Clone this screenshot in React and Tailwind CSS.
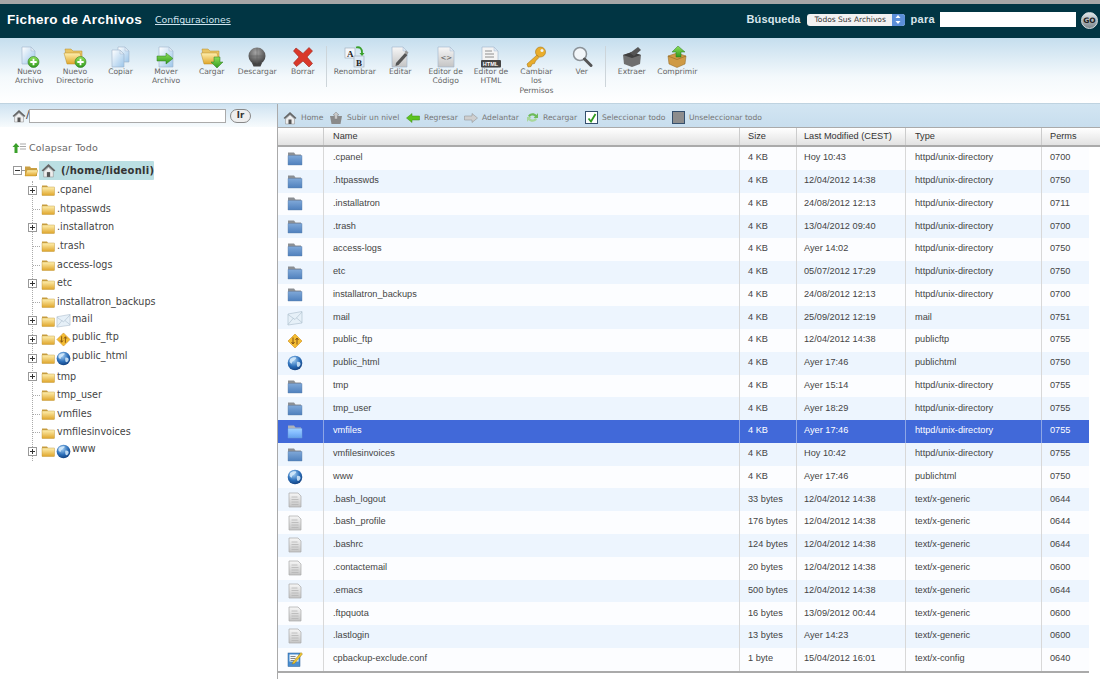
import React from "react";

const Defs = () => (
  <svg className="block w-0 h-0" aria-hidden="true">
    <defs>
      <linearGradient id="yf" x1="0" y1="0" x2="0" y2="1"><stop offset="0" stopColor="#fff0b0" /><stop offset="1" stopColor="#dfa52a" /></linearGradient>
      <linearGradient id="bf" x1="0" y1="0" x2="0" y2="1"><stop offset="0" stopColor="#7fa8d8" /><stop offset="1" stopColor="#4f80bd" /></linearGradient>
      <linearGradient id="dc" x1="0" y1="0" x2="1" y2="1"><stop offset="0" stopColor="#ffffff" /><stop offset="1" stopColor="#9cc6ea" /></linearGradient>
      <linearGradient id="dg" x1="0" y1="0" x2="0" y2="1"><stop offset="0" stopColor="#f7f7f7" /><stop offset="1" stopColor="#c4c4c4" /></linearGradient>
      <radialGradient id="gb" cx="0.4" cy="0.3" r="0.8"><stop offset="0" stopColor="#a8d2f5" /><stop offset="0.55" stopColor="#2a6db8" /><stop offset="1" stopColor="#0c3470" /></radialGradient>
      <radialGradient id="sp" cx="0.45" cy="0.3" r="0.8"><stop offset="0" stopColor="#a8a8a8" /><stop offset="1" stopColor="#2f2f2f" /></radialGradient>
      <linearGradient id="gr" x1="0" y1="0" x2="0" y2="1"><stop offset="0" stopColor="#8fe05a" /><stop offset="1" stopColor="#2f9a1e" /></linearGradient>
    </defs>
  </svg>
);

const Ic = ({ w = 22, h = 22, vb, children, cls = "" }) => (
  <svg width={w} height={h} viewBox={vb || `0 0 ${w} ${h}`} className={`block shrink-0 ${cls}`}>{children}</svg>
);

const Plus = () => (
  <g>
    <circle cx="15.5" cy="16" r="5.5" fill="url(#gr)" stroke="#2d7a22" strokeWidth=".6" />
    <path d="M15.5 12.8v6.4M12.3 16h6.4" stroke="#fff" strokeWidth="1.8" />
  </g>
);
const Page = ({ x = 4, y = 1, w = 13, h = 17, fill = "url(#dc)" }) => (
  <g>
    <path d={`M${x} ${y}h${w - 4}l4 4v${h - 4}h-${w}z`} fill={fill} stroke="#9db4c9" strokeWidth=".6" />
    <path d={`M${x + w - 4} ${y}v4h4z`} fill="#dfe9f3" stroke="#9db4c9" strokeWidth=".4" />
  </g>
);
const BigFolder = () => (
  <g>
    <path d="M2 3h6l2 2h9v11H4z" fill="#e8c464" stroke="#b98e2b" strokeWidth=".5" />
    <path d="M1 7h16l3 11H4z" fill="url(#yf)" stroke="#b98e2b" strokeWidth=".5" />
  </g>
);

const TB = {
  newfile: <Ic><Page /><Plus /></Ic>,
  newdir: <Ic w={24}><BigFolder /><g transform="translate(2 0)"><Plus /></g></Ic>,
  copy: <Ic><Page x={9} y={1} w={11} h={15} /><Page x={3} y={4} w={12} h={17} /></Ic>,
  move: (
    <Ic><Page x={4} y={1} w={14} h={20} />
      <path d="M2 10h9V7l7 5.5L11 18v-3H2z" fill="url(#gr)" stroke="#2d7a22" strokeWidth=".5" />
    </Ic>
  ),
  upload: (
    <Ic w={24}><BigFolder />
      <path d="M14 11h6v5h3l-6 6-6-6h3z" fill="url(#gr)" stroke="#2d7a22" strokeWidth=".5" />
    </Ic>
  ),
  download: (
    <Ic>
      <circle cx="11" cy="10" r="8.5" fill="url(#sp)" />
      <path d="M6 17h10l-1.5 3.5h-7z" fill="#444" />
      <path d="M3 10h16M11 2v16" stroke="#5c5c5c" strokeWidth=".5" />
    </Ic>
  ),
  del: (
    <Ic>
      <path d="M4 2l7 5.5L17 1.5l3.5 3.5-5.5 6 5.5 6.500-3.5 3.500-6-6-6.500 5.500L1.500 17 7 11 1.500 5z" fill="#d9382a" stroke="#9d2117" strokeWidth=".6" />
    </Ic>
  ),
  rename: (
    <Ic>
      <rect x="1" y="2" width="10" height="10" fill="#f4f7fb" stroke="#9aa8b5" strokeWidth=".6" />
      <rect x="10" y="10" width="10" height="11" fill="#dce9f6" stroke="#9aa8b5" strokeWidth=".6" />
      <text x="3" y="10.500" fontSize="9" fontWeight="700" fontFamily="Liberation Serif" fill="#222">A</text>
      <text x="12" y="19.500" fontSize="9" fontWeight="700" fontFamily="Liberation Serif" fill="#222">B</text>
      <path d="M12 1.500c4-1 6 1 6 5v2" fill="none" stroke="#3aa02a" strokeWidth="1.800" />
      <path d="M15.500 7h5l-2.500 3z" fill="#3aa02a" />
    </Ic>
  ),
  edit: (
    <Ic>
      <Page x={3} y={1} w={15} h={20} fill="url(#dg)" />
      <path d="M7 17l9-10 2.500 2-9 10-3 1z" fill="#555" />
      <path d="M15.500 6l1.500-1.500 2.500 2-1.500 2z" fill="#999" />
    </Ic>
  ),
  code: (
    <Ic>
      <Page x={3} y={1} w={16} h={20} fill="url(#dg)" />
      <text x="5.500" y="14" fontSize="7" fontFamily="DejaVu Sans" fill="#555">{"<>"}</text>
    </Ic>
  ),
  html: (
    <Ic>
      <Page x={2} y={1} w={16} h={20} fill="#f4f4f4" />
      <path d="M5 5h7M5 8h9M5 11h9" stroke="#777" strokeWidth=".8" />
      <rect x="1" y="14" width="20" height="7.500" rx="1" fill="#444" />
      <text x="2.800" y="20" fontSize="5.500" fontWeight="700" fontFamily="Liberation Sans" fill="#fff">HTML</text>
    </Ic>
  ),
  key: (
    <Ic>
      <circle cx="15.500" cy="6" r="5" fill="#e9ad2c" stroke="#a9781a" strokeWidth=".6" />
      <circle cx="17" cy="4.500" r="1.500" fill="#eef3f8" />
      <path d="M12 9L2 18l1 3 3-.5 1-2.500 2.500-.5 1-2.500 3.500-3.500z" fill="#e9ad2c" stroke="#a9781a" strokeWidth=".6" />
    </Ic>
  ),
  view: (
    <Ic>
      <circle cx="9" cy="8" r="6.500" fill="#f2f6f9" stroke="#8b9298" strokeWidth="1.500" />
      <path d="M13.500 13l6.500 6.500" stroke="#555" strokeWidth="3" strokeLinecap="round" />
    </Ic>
  ),
  extract: (
    <Ic>
      <path d="M2 9l9-3 9 3-1 9-8 3-8-3z" fill="#6f6f6f" />
      <path d="M2 9l9 3 9-3-9-3z" fill="#3f3f3f" />
      <path d="M9 7l8-6 3 3-7 6z" fill="#555" />
    </Ic>
  ),
  compress: (
    <Ic>
      <path d="M2 10l9-3 9 3-1 8-8 3.500L3 18z" fill="#cf9a45" stroke="#8f6420" strokeWidth=".5" />
      <path d="M2 10l9 3.500 9-3.500" fill="none" stroke="#8f6420" strokeWidth=".6" />
      <path d="M10 11V6H6l6-6 7 6h-4v5z" fill="url(#gr)" stroke="#2d7a22" strokeWidth=".5" />
    </Ic>
  ),
};

const tools1 = [
  ["newfile", ["Nuevo", "Archivo"]], ["newdir", ["Nuevo", "Directorio"]], ["copy", ["Copiar"]], ["move", ["Mover", "Archivo"]],
  ["upload", ["Cargar"]], ["download", ["Descargar"]], ["del", ["Borrar"]],
];
const tools2 = [
  ["rename", ["Renombrar"]], ["edit", ["Editar"]], ["code", ["Editor de", "Código"]], ["html", ["Editor de", "HTML"]],
  ["key", ["Cambiar", "los", "Permisos"]], ["view", ["Ver"]],
];
const tools3 = [["extract", ["Extraer"]], ["compress", ["Comprimir"]]];

const Tool = ({ t, w = "w-[45.6px]" }) => (
  <div className={`${w} flex flex-col items-center shrink-0`}>
    <div className="h-[21px] flex items-center justify-center">{TB[t[0]]}</div>
    <div className="text-center text-[7.6px] leading-[9.4px] text-[#666] whitespace-nowrap">
      {t[1].map((l) => <div key={l}>{l}</div>)}
    </div>
  </div>
);

const Home = ({ s = 14 }) => (
  <Ic w={s} h={s} vb="0 0 14 14">
    <path d="M7 1L.5 7l1.500 1L7 3.500 12 8l1.500-1z" fill="#666" />
    <path d="M2.500 8L7 4l4.500 4v5h-9z" fill="#eee" stroke="#888" strokeWidth=".5" />
    <rect x="5.500" y="8.500" width="3" height="4.500" fill="#555" />
  </Ic>
);
const Up = () => (
  <Ic w={14} h={14}>
    <path d="M1 5h12l-1.500 8h-9z" fill="#8a8a8a" />
    <path d="M7 1l3 3H8.500v4h-3V4H4z" fill="#c9c9c9" stroke="#777" strokeWidth=".4" />
  </Ic>
);
const Arrow = ({ dir, fill, stroke }) => (
  <Ic w={14} h={14}>
    <path d={dir === "l" ? "M0.500 7L6 2.500V5h7.500v4H6v2.500z" : "M13.500 7L8 2.500V5H.5v4H8v2.500z"} fill={fill} stroke={stroke} strokeWidth=".5" />
  </Ic>
);
const Reload = () => (
  <Ic w={13} h={13}>
    <path d="M2 5c1-3 6-4 8.500-1L12 2v5H7.500l1.500-1.500C7.500 4 4.500 4.200 4 6z" fill="#6ebb5a" />
    <path d="M11 8c-1 3-6 4-8.500 1L1 11V6h4.500L4 7.500C5.500 9 8.500 8.800 9 7z" fill="#a8d79b" />
  </Ic>
);
const Check = ({ on }) => (
  <div className={`w-[13px] h-[13px] border border-[#34506e] shrink-0 flex items-center justify-center ${on ? "bg-white" : "bg-[#8d8d8d]"}`}>
    {on && (
      <svg width="10" height="10" viewBox="0 0 10 10"><path d="M1.500 5.500l2.500 3L8.500 1" fill="none" stroke="#2f9a1e" strokeWidth="1.800" /></svg>
    )}
  </div>
);

const nav = [
  [<Home key="h" />, "Home", "w-[46px]"],
  [<Up key="u" />, "Subir un nivel", "w-[77px]"],
  [<Arrow key="l" dir="l" fill="#5cc31f" stroke="#3c8d12" />, "Regresar", "w-[58px]"],
  [<Arrow key="r" dir="r" fill="#cfcfcf" stroke="#888" />, "Adelantar", "w-[62px]"],
  [<Reload key="rl" />, "Recargar", "w-[59px]"],
  [<Check key="c1" on />, "Seleccionar todo", "w-[87px]"],
  [<Check key="c2" />, "Unseleccionar todo", "w-[90px]"],
];

const FolderB = () => (
  <Ic w={16} h={15}>
    <path d="M1 1.500h6l1.500 2H14v3H1z" fill="#8b8f94" />
    <path d="M1 4.500h14v9.500H1z" fill="url(#bf)" stroke="#5d7fa8" strokeWidth=".4" />
  </Ic>
);
const FileI = () => (
  <Ic w={16} h={16}>
    <path d="M2 1h9l3 3v11H2z" fill="url(#dg)" stroke="#a9a9a9" strokeWidth=".7" />
    <path d="M4.500 5h6M4.500 7.500h7M4.500 10h7M4.500 12.500h7" stroke="#b5b5b5" strokeWidth=".8" />
  </Ic>
);
const MailI = ({ s = 16 }) => (
  <Ic w={s} h={s} vb="0 0 16 16">
    <path d="M1 4l14-2.500V13L1 15z" fill="#e6f0f8" stroke="#a9bccb" strokeWidth=".6" />
    <path d="M1 4.500l7 5 7-7.500M1 14.500l5.500-6.500M15 12.500L9.500 8" fill="none" stroke="#a9bccb" strokeWidth=".6" />
  </Ic>
);
const FtpI = ({ s = 16 }) => (
  <Ic w={s} h={s} vb="0 0 16 16">
    <path d="M8 1l7 7-7 7-7-7z" fill="#f4bd33" stroke="#cf8d1d" strokeWidth=".6" strokeLinejoin="round" />
    <path d="M6 4.500v6M4.500 9L6 11l1.500-2M10 11.500v-6M8.500 7L10 5l1.500 2" fill="none" stroke="#7a4a10" strokeWidth=".9" />
  </Ic>
);
const GlobeI = ({ s = 16 }) => (
  <Ic w={s} h={s} vb="0 0 16 16">
    <circle cx="8" cy="8" r="7.300" fill="url(#gb)" />
    <path d="M3 4c2-1.500 4-2 6-1.500 1 1-1 2-2 3s-2 1-2 2.500-2 0-2.500-1.500zM10 7c2-.5 3.500.5 3.500 2s-1.500 3-2.500 3-1.500-3-1-5z" fill="#d8ecfb" opacity=".85" />
  </Ic>
);
const ConfI = () => (
  <Ic w={16} h={16}>
    <rect x="1" y="2" width="12" height="13.500" fill="#4a8ed0" stroke="#2a5f98" strokeWidth=".5" />
    <rect x="2.500" y="3.500" width="9" height="7" fill="#f3f7fb" />
    <path d="M3.500 5.500h5M3.500 7.500h5M3.500 9.500h4" stroke="#555" strokeWidth=".7" />
    <path d="M6 11l8-9.500 1.500 1.500-8 9.500-2.500.5z" fill="#f0c52e" stroke="#8a6a10" strokeWidth=".4" />
  </Ic>
);

const FolderY = ({ open }) => (
  <Ic w={14} h={12}>
    <path d="M1 1.500h5l1 1.500h6v8H1z" fill="#caa044" />
    {open ? <path d="M1 11l2-6h11l-2 6z" fill="url(#yf)" stroke="#b98e2b" strokeWidth=".4" /> : <rect x="1" y="3" width="12.500" height="8.500" fill="url(#yf)" stroke="#b98e2b" strokeWidth=".4" />}
  </Ic>
);

const Box = ({ minus }) => (
  <div className="w-[9px] h-[9px] border border-[#999] bg-white flex items-center justify-center relative shrink-0">
    <div className="w-[5px] h-px bg-[#333]" />
    {!minus && <div className="w-px h-[5px] bg-[#333] absolute" />}
  </div>
);

const tree = [
  [".cpanel", 1], [".htpasswds", 0], [".installatron", 1], [".trash", 0], ["access-logs", 0], ["etc", 1], ["installatron_backups", 0],
  ["mail", 1, "mail"], ["public_ftp", 1, "ftp"], ["public_html", 1, "globe"], ["tmp", 1], ["tmp_user", 0], ["vmfiles", 0], ["vmfilesinvoices", 0], ["www", 1, "globe"],
];

const rows = [
  [".cpanel", "f", "4 KB", "Hoy 10:43", "httpd/unix-directory", "0700"],
  [".htpasswds", "f", "4 KB", "12/04/2012 14:38", "httpd/unix-directory", "0750"],
  [".installatron", "f", "4 KB", "24/08/2012 12:13", "httpd/unix-directory", "0711"],
  [".trash", "f", "4 KB", "13/04/2012 09:40", "httpd/unix-directory", "0700"],
  ["access-logs", "f", "4 KB", "Ayer 14:02", "httpd/unix-directory", "0750"],
  ["etc", "f", "4 KB", "05/07/2012 17:29", "httpd/unix-directory", "0750"],
  ["installatron_backups", "f", "4 KB", "24/08/2012 12:13", "httpd/unix-directory", "0700"],
  ["mail", "m", "4 KB", "25/09/2012 12:19", "mail", "0751"],
  ["public_ftp", "t", "4 KB", "12/04/2012 14:38", "publicftp", "0755"],
  ["public_html", "g", "4 KB", "Ayer 17:46", "publichtml", "0750"],
  ["tmp", "f", "4 KB", "Ayer 15:14", "httpd/unix-directory", "0755"],
  ["tmp_user", "f", "4 KB", "Ayer 18:29", "httpd/unix-directory", "0755"],
  ["vmfiles", "f", "4 KB", "Ayer 17:46", "httpd/unix-directory", "0755", true],
  ["vmfilesinvoices", "f", "4 KB", "Hoy 10:42", "httpd/unix-directory", "0755"],
  ["www", "g", "4 KB", "Ayer 17:46", "publichtml", "0750"],
  [".bash_logout", "d", "33 bytes", "12/04/2012 14:38", "text/x-generic", "0644"],
  [".bash_profile", "d", "176 bytes", "12/04/2012 14:38", "text/x-generic", "0644"],
  [".bashrc", "d", "124 bytes", "12/04/2012 14:38", "text/x-generic", "0644"],
  [".contactemail", "d", "20 bytes", "12/04/2012 14:38", "text/x-generic", "0600"],
  [".emacs", "d", "500 bytes", "12/04/2012 14:38", "text/x-generic", "0644"],
  [".ftpquota", "d", "16 bytes", "13/09/2012 00:44", "text/x-generic", "0600"],
  [".lastlogin", "d", "13 bytes", "Ayer 14:23", "text/x-generic", "0600"],
  ["cpbackup-exclude.conf", "c", "1 byte", "15/04/2012 16:01", "text/x-config", "0640"],
];
const icons = { f: <FolderB />, m: <MailI />, t: <FtpI />, g: <GlobeI />, d: <FileI />, c: <ConfI /> };
const grid = "grid grid-cols-[45px_416px_57px_109px_136px_48px]";
const pads = ["pl-[9px]", "pl-[8px]", "pl-[7px]", "pl-[9px]", "pl-[8px]"];

export default function App() {
  return (
    <div className="w-[1100px] h-[679px] overflow-hidden bg-white flex flex-col font-['DejaVu_Sans',sans-serif]">
      <Defs />
      <div className="h-[4px] bg-[#a6a6a6] shrink-0" />
      <header className="h-[34px] shrink-0 bg-[#013543] flex items-center pl-[7px] pr-[2px] pb-[3px] text-white">
        <h1 className="text-[13.5px] font-bold leading-none font-['Liberation_Sans',sans-serif] tracking-[0.3px]">Fichero de Archivos</h1>
        <a className="ml-[13px] mt-[2px] text-[9.4px] text-[#cfe3ee] underline">Configuraciones</a>
        <div className="ml-auto flex items-center">
          <span className="text-[11px] font-bold text-[#d8e6ec] font-['Liberation_Sans',sans-serif] tracking-[0.1px]">Búsqueda</span>
          <div className="ml-[6px] w-[98px] h-[12px] rounded-[3px] bg-[#f2f2f2] flex items-center justify-between overflow-hidden">
            <span className="pl-[8px] text-[7.5px] text-[#333] whitespace-nowrap">Todos Sus Archivos</span>
            <span className="w-[13px] h-full bg-[#5b8fd9] flex items-center justify-center">
              <svg width="6" height="9" viewBox="0 0 6 9" className="block"><path d="M3 0l2.500 3h-5zM3 9L.5 6h5z" fill="#fff" /></svg>
            </span>
          </div>
          <span className="ml-[6px] text-[11px] font-bold text-[#d8e6ec] font-['Liberation_Sans',sans-serif] tracking-[0.3px]">para</span>
          <div className="ml-[5px] w-[136px] h-[15px] bg-white" />
          <div className="ml-[5px] mt-[2px] w-[17px] h-[17px] rounded-full bg-gradient-to-b from-[#dfe5e8] to-[#7c878d] border border-[#d5dcdf] flex items-center justify-center text-[7.5px] font-bold text-[#222]">GO</div>
        </div>
      </header>

      <div className="h-[65px] shrink-0 flex pl-[6.5px] pt-[8px] bg-gradient-to-b from-[#c5deee] via-[#f4f9fc] via-60% to-white">
        {tools1.map((t) => <Tool key={t[0]} t={t} />)}
        <div className="w-px h-[41px] bg-[#cdd5da] ml-[0.3px] mr-[5.2px] shrink-0" />
        {tools2.map((t) => <Tool key={t[0]} t={t} w="w-[45.4px]" />)}
        <div className="w-px h-[41px] bg-[#cdd5da] ml-[0.3px] mr-[3.2px] shrink-0" />
        {tools3.map((t) => <Tool key={t[0]} t={t} />)}
      </div>

      <div className="flex-1 flex min-h-0 border-t border-[#bfd3e0]">
        <aside className="w-[278px] shrink-0 border-r border-[#aaa] flex flex-col">
          <div className="h-[23px] shrink-0 flex items-center pl-[12px] bg-gradient-to-b from-[#cfe3f1] to-[#f7fbfd]">
            <Home s={14} />
            <span className="text-[11px] text-[#444] w-[3px]">/</span>
            <div className="w-[197px] h-[14px] bg-white border border-[#aaa]" />
            <div className="ml-[4px] w-[21px] h-[14px] rounded-full border border-[#888] bg-[#eee] flex items-center justify-center text-[8.5px] font-bold text-[#333]">Ir</div>
          </div>
          <div className="ml-[12px] mt-[15px] flex items-center h-[12px]">
            <svg width="16" height="12" viewBox="0 0 16 12" className="block shrink-0">
              <path d="M4 1L7.500 5H5.500v6h-3V5H.5z" fill="#3aa02a" />
              <path d="M8 2h6M8 4.500h6M8 7h6" stroke="#aaa" strokeWidth="1.200" />
            </svg>
            <span className="ml-px text-[9.5px] text-[#666] tracking-[0.2px]">Colapsar Todo</span>
          </div>
          <div className="ml-[13px] mt-[7px] flex items-center h-[19px]">
            <Box minus />
            <div className="w-[2px] border-t border-dotted border-[#999]" />
            <FolderY open />
            <div className="ml-px h-[19px] w-[115px] pl-[2px] bg-[#bbdfe3] rounded-[1px] flex items-center">
              <Home s={15} />
              <span className="ml-[5px] text-[10px] font-bold text-[#333] tracking-[0.25px] whitespace-nowrap">(/home/lideonli)</span>
            </div>
          </div>
          <ul className="ml-[32px] mt-[1px] border-l border-dotted border-[#aaa] w-fit">
            {tree.map(([n, plus, ic]) => (
              <li key={n} className="h-[18.65px] flex items-center relative pl-[8px] w-[230px]">
                {plus ? (
                  <span className="absolute left-[-5px] top-[5px]"><Box /></span>
                ) : (
                  <span className="absolute left-0 top-[9px] w-[7px] border-t border-dotted border-[#aaa]" />
                )}
                <FolderY />
                {ic === "mail" && <span className="ml-px"><MailI s={15} /></span>}
                {ic === "ftp" && <span className="ml-px"><FtpI s={15} /></span>}
                {ic === "globe" && <span className="ml-px"><GlobeI s={15} /></span>}
                <span className={`text-[9.6px] text-[#444] whitespace-nowrap ${ic ? "ml-px mb-[4px]" : "ml-[2px]"}`}>{n}</span>
              </li>
            ))}
          </ul>
        </aside>

        <main className="flex-1 min-w-0 flex flex-col">
          <div className="h-[23px] shrink-0 flex items-center pl-[5px] pt-[4px] bg-gradient-to-b from-[#d2e5f2] to-[#c8deee]">
            {nav.map(([ic, label, w]) => (
              <div key={label} className={`flex items-center shrink-0 ${w}`}>
                {ic}
                <span className="ml-[4px] text-[7.6px] text-[#777] whitespace-nowrap">{label}</span>
              </div>
            ))}
          </div>
          <div className="font-['Liberation_Sans',sans-serif] text-[9.2px] text-[#444]">
            <div className="h-[20px] border-t border-b-2 border-t-[#aaa] border-b-[#aaa] bg-gradient-to-b from-white to-[#e2e2e2]">
              <div className={`${grid} h-full text-[#333]`}>
                {["", "Name", "Size", "Last Modified (CEST)", "Type", "Perms"].map((h, i) => (
                  <div key={i} className={`flex items-center ${i ? `border-l border-[#ccc] ${pads[i - 1]}` : ""} whitespace-nowrap`}>{h}</div>
                ))}
              </div>
            </div>
            <div className="w-[811px] border-b-2 border-[#aaa]">
              {rows.map((r, i) => (
                <div
                  key={r[0]}
                  className={`${grid} h-[22.77px] ${r[6] ? "bg-[#4169d9] text-white" : i % 2 ? "bg-[#edf5fe]" : "bg-[#fcfdff]"}`}
                >
                  <div className="flex items-center pl-[9px]">{r[6] ? <span className="brightness-125"><FolderB /></span> : icons[r[1]]}</div>
                  {[r[0], r[2], r[3], r[4], r[5]].map((c, j) => (
                    <div key={j} className={`flex items-center border-l pb-[0.5px] ${pads[j]} ${r[6] ? "border-[#8ea6e6]" : "border-[#d8d8d8]"} whitespace-nowrap`}>{c}</div>
                  ))}
                </div>
              ))}
            </div>
          </div>
        </main>
      </div>
    </div>
  );
}
